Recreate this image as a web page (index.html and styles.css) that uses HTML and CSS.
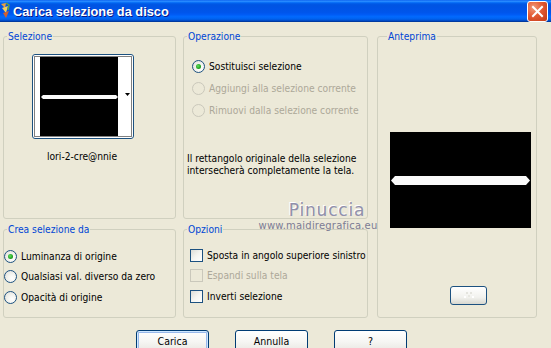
FILE: index.html
```html
<!DOCTYPE html>
<html lang="it">
<head>
<meta charset="utf-8">
<title>Carica selezione da disco</title>
<link rel="stylesheet" href="styles.css">
</head>
<body>
<div class="window">
  <div class="titlebar">
    <svg class="app-icon" width="11" height="18" viewBox="0 0 11 18">
      <path d="M1 2 L6 1 L5 6 Z" fill="#e8a040"/>
      <path d="M2 6 L8 4 L6 11 Z" fill="#f0d060"/>
      <path d="M3 11 L9 9 L6 16 Z" fill="#d06030"/>
      <path d="M6 1 L9 3 L8 8" stroke="#60a040" stroke-width="1.5" fill="none"/>
    </svg>
    <span class="title">Carica selezione da disco</span>
    <span class="close">
      <svg width="21" height="21" viewBox="0 0 21 21"><path d="M6 6 L15 15 M15 6 L6 15" stroke="#fff" stroke-width="2" stroke-linecap="square"/></svg>
    </span>
  </div>

  <div class="content">
    <fieldset class="grp sel">
      <legend>Selezione</legend>
      <div class="thumb-wrap">
        <div class="thumb">
          <svg width="100" height="83" viewBox="0 0 100 83">
            <rect x="7" y="2" width="78" height="79" fill="#000"/>
            <polygon points="8,42 10,40 83,40 85,42 83,44 10,44" fill="#fafafa"/>
            <polygon points="92,38 97,38 94.5,41" fill="#000"/>
            <rect x="1.5" y="1.5" width="97" height="80" fill="none" stroke="#000" stroke-dasharray="1 1"/>
          </svg>
        </div>
        <div class="thumb-label">lori-2-cre@nnie</div>
      </div>
    </fieldset>

    <fieldset class="grp op">
      <legend>Operazione</legend>
      <div class="opt"><span class="radio on"></span><span>Sostituisci selezione</span></div>
      <div class="opt dis"><span class="radio"></span><span>Aggiungi alla selezione corrente</span></div>
      <div class="opt dis"><span class="radio"></span><span>Rimuovi dalla selezione corrente</span></div>
      <p class="desc">Il rettangolo originale della selezione<br>intersecherà completamente la tela.</p>
    </fieldset>

    <fieldset class="grp prev">
      <legend>Anteprima</legend>
      <svg class="preview" width="141" height="96" viewBox="0 0 141 96">
        <rect width="141" height="96" fill="#000"/>
        <polygon points="1,48.5 5,44 136,44 140,48.5 136,53 5,53" fill="#fafafa"/>
      </svg>
      <div class="mini-btn">
        <svg width="14" height="8" viewBox="0 0 14 8">
          <rect x="4" y="0" width="2" height="2" fill="#E4E4DE"/>
          <rect x="8" y="0" width="2" height="2" fill="#E4E4DE"/>
          <rect x="2" y="4" width="2" height="2" fill="#fff"/>
          <rect x="6" y="3" width="2" height="2" fill="#E8E8E2"/>
          <rect x="10" y="4" width="2" height="2" fill="#fff"/>
        </svg>
      </div>
    </fieldset>

    <fieldset class="grp crea">
      <legend>Crea selezione da</legend>
      <div class="opt"><span class="radio on"></span><span>Luminanza di origine</span></div>
      <div class="opt"><span class="radio"></span><span>Qualsiasi val. diverso da zero</span></div>
      <div class="opt"><span class="radio"></span><span>Opacità di origine</span></div>
    </fieldset>

    <fieldset class="grp opz">
      <legend>Opzioni</legend>
      <div class="opt"><span class="check"></span><span>Sposta in angolo superiore sinistro</span></div>
      <div class="opt dis"><span class="check"></span><span>Espandi sulla tela</span></div>
      <div class="opt"><span class="check"></span><span>Inverti selezione</span></div>
    </fieldset>
  </div>

  <div class="buttons">
    <button class="btn default">Carica</button>
    <button class="btn">Annulla</button>
    <button class="btn">?</button>
  </div>

  <div class="watermark">
    <div class="wm-name">Pinuccia</div>
    <div class="wm-url">www.maidiregrafica.eu</div>
  </div>
</div>
</body>
</html>
```

FILE: styles.css
```css
* { box-sizing: border-box; }

body {
  margin: 0;
  background: #ECE9D8;
  font-family: "DejaVu Sans Condensed", "DejaVu Sans", sans-serif;
  font-stretch: semi-condensed;
  font-size: 10.2px;
  color: #000;
}

.window {
  width: 551px;
  height: 348px;
  position: relative;
  overflow: hidden;
  background: #ECE9D8;
}

.titlebar {
  height: 22px;
  display: flex;
  align-items: center;
  background: linear-gradient(to bottom, #0058EE 0%, #3593FF 5%, #127DFF 9%, #0262EE 14%, #0057E5 20%, #0054E3 26%, #0055EB 56%, #005BF5 66%, #026AFE 76%, #0062EF 86%, #0052D6 92%, #0040AB 96%, #003092 100%);
  color: #fff;
}

.app-icon { flex: none; }

.title {
  margin-left: 2px;
  font-family: "Liberation Sans", sans-serif;
  font-stretch: normal;
  font-weight: bold;
  font-size: 12.8px;
  text-shadow: 1px 1px 0 #0A1883;
}

.close {
  margin-left: auto;
  margin-right: 3px;
  width: 21px;
  height: 21px;
  border: 1px solid #fff;
  border-radius: 3px;
  background: radial-gradient(circle at 30% 30%, #F09A7A 0%, #E35A33 45%, #C23A16 100%);
  display: flex;
  align-items: center;
  justify-content: center;
}
.close svg { display: block; margin: -1px; }

.content {
  display: grid;
  grid-template-columns: 173px 192px 169px;
  grid-template-rows: 189px 95px;
  row-gap: 4px;
  padding: 8px 0 0 3px;
}

.grp {
  margin: 0;
  padding: 0;
  min-width: 0;
  border: 1px solid #D0D0BF;
  border-radius: 3px;
}

.grp legend {
  margin-left: 3px;
  padding: 0 1px;
  color: #0046D5;
  line-height: 13px;
}

.sel { grid-column: 1; grid-row: 1; }
.op { grid-column: 2; grid-row: 1; margin-left: 7px; padding: 12px 0 0 8px; }
.op legend { margin-left: -5px; }
.prev { grid-column: 3; grid-row: 1 / span 2; margin-left: 9px; padding: 89px 0 0 12px; }
.prev legend { margin-left: -3px; }
.crea { grid-column: 1; grid-row: 2; padding: 10px 0 0 0; }
.opz { grid-column: 2; grid-row: 2; margin-left: 7px; padding: 9px 0 0 6px; }
.opz legend { margin-left: -3px; }

.thumb-wrap {
  width: 102px;
  margin: 11px 0 0 28px;
  display: flex;
  flex-direction: column;
  align-items: center;
}

.thumb {
  width: 102px;
  height: 85px;
  border: 1px solid #1C5180;
  border-radius: 3px;
  background: #fff;
}
.thumb svg { display: block; }

.thumb-label {
  margin-top: 11px;
  line-height: 13px;
  margin-left: -2px;
}

.opt {
  display: flex;
  align-items: center;
  height: 22px;
  gap: 4px;
  white-space: nowrap;
}
.crea .opt, .opz .opt { height: 20.5px; }
.opt.dis { color: #ACA899; }

.radio {
  flex: none;
  width: 13px;
  height: 13px;
  border-radius: 50%;
  border: 1px solid #1C5180;
  background: radial-gradient(circle at 65% 65%, #fff 0%, #F4F4F0 40%, #DCDCD7 100%);
  display: flex;
  align-items: center;
  justify-content: center;
}
.radio.on::after {
  content: "";
  width: 5px;
  height: 5px;
  border-radius: 50%;
  background: radial-gradient(circle at 40% 40%, #5EE05E 0%, #21A121 60%, #138013 100%);
}
.dis .radio, .dis .check {
  border-color: #CAC8BB;
  background: #ECE9D8;
}

.check {
  flex: none;
  width: 13px;
  height: 13px;
  border: 1px solid #1C5180;
  background: linear-gradient(135deg, #DCDCD7 0%, #F4F4F0 50%, #fff 100%);
}

.desc {
  margin: 32px 0 0 -5px;
  line-height: 12px;
  white-space: nowrap;
}

.preview { display: block; }

.mini-btn {
  width: 37px;
  height: 19px;
  margin: 58px 0 0 60px;
  border: 1px solid #1C5180;
  border-radius: 3px;
  background: linear-gradient(to bottom, #fff 0%, #F2F2EE 60%, #D8D8D0 100%);
  display: flex;
  align-items: center;
  justify-content: center;
}
.mini-btn svg { display: block; }

.buttons {
  display: flex;
  gap: 26px;
  padding: 12px 0 0 136px;
}

.btn {
  width: 73px;
  height: 23px;
  padding: 0 0 2px;
  border: 1px solid #003C74;
  border-radius: 3px;
  background: linear-gradient(to bottom, #fff 0%, #F6F6F3 50%, #ECEBE6 85%, #D6D0C5 100%);
  font-family: "DejaVu Sans Condensed", "DejaVu Sans", sans-serif;
  font-stretch: semi-condensed;
  font-size: 10.5px;
  color: #000;
}
.btn.default {
  box-shadow: inset 0 0 0 1px #CEE7FF, inset 0 0 0 2px #98B8EA;
}

.watermark {
  position: absolute;
  left: 256px;
  top: 200px;
  width: 124px;
  text-align: center;
  pointer-events: none;
}
.wm-name {
  font-family: "DejaVu Sans", sans-serif;
  font-stretch: normal;
  font-size: 17px;
  line-height: 20px;
  letter-spacing: 0.8px;
  color: #9090AC;
  text-shadow: -1px -1px 0 #fff;
  margin-left: 18px;
}
.wm-url {
  font-family: "DejaVu Sans", sans-serif;
  font-stretch: normal;
  font-size: 10px;
  line-height: 12px;
  color: #7C7C94;
  letter-spacing: 0.2px;
}
```
